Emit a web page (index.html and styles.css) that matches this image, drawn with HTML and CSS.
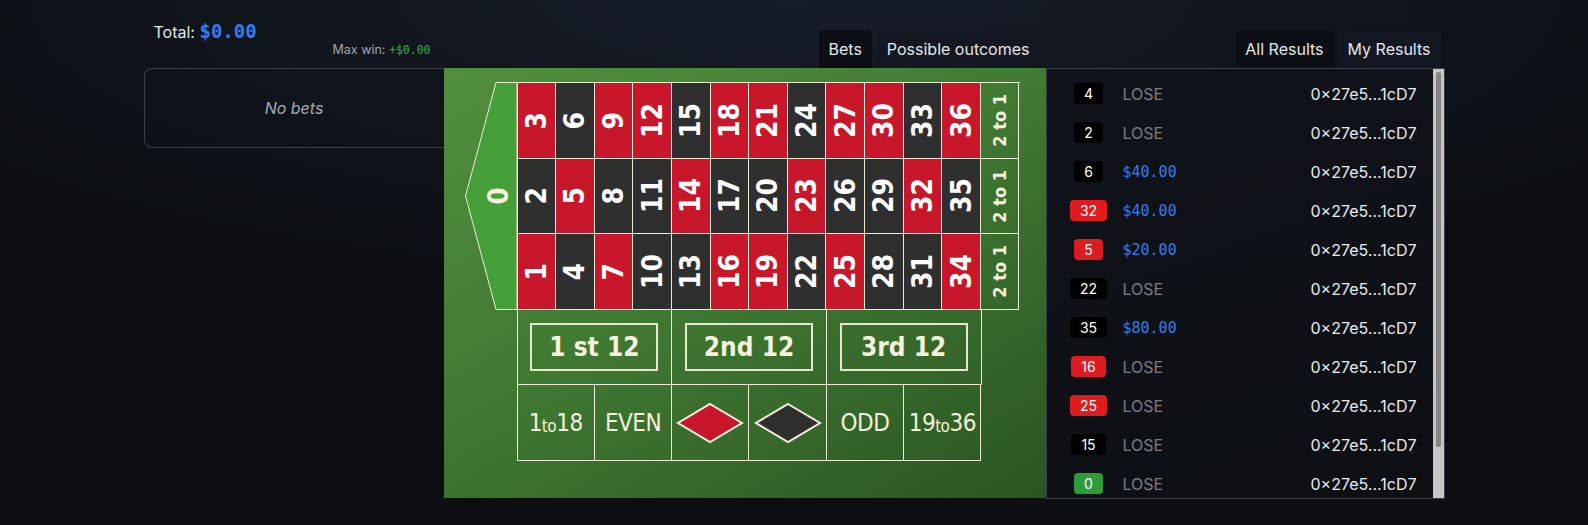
FILE: index.html
```html
<!DOCTYPE html>
<html>
	<head>
		<meta charset="UTF-8">
		<title>Roulette</title>
		<link rel="stylesheet" href="styles.css">
	</head>
	<body>
		<div class="page">
			<div class="head">
				<div class="totals">
					<div class="total">Total: <span class="total-amt">$0.00</span></div>
					<div class="maxwin">Max win: <span class="maxwin-amt">+$0.00</span></div>
				</div>
				<div class="tabs board-tabs">
					<div class="tab active">Bets</div>
					<div class="tab">Possible outcomes</div>
				</div>
				<div class="tabs result-tabs">
					<div class="tab active">All Results</div>
					<div class="tab">My Results</div>
				</div>
			</div>
			<div class="main">
				<div class="bets">No bets</div>
				<div class="board">
					<div class="board-top">
						<svg class="zero" width="52" height="228" viewBox="0 0 52 228">
							<polygon points="31,0.5 52,0.5 52,227.5 31,227.5 0.5,114"/>
							<text transform="translate(33 114) rotate(-90)">0</text>
						</svg>
						<div class="numbers">
							<div class="cell red"><span>3</span></div>
							<div class="cell black"><span>6</span></div>
							<div class="cell red"><span>9</span></div>
							<div class="cell red"><span>12</span></div>
							<div class="cell black"><span>15</span></div>
							<div class="cell red"><span>18</span></div>
							<div class="cell red"><span>21</span></div>
							<div class="cell black"><span>24</span></div>
							<div class="cell red"><span>27</span></div>
							<div class="cell red"><span>30</span></div>
							<div class="cell black"><span>33</span></div>
							<div class="cell red"><span>36</span></div>
							<div class="cell col"><span>2 to 1</span></div>

							<div class="cell black"><span>2</span></div>
							<div class="cell red"><span>5</span></div>
							<div class="cell black"><span>8</span></div>
							<div class="cell black"><span>11</span></div>
							<div class="cell red"><span>14</span></div>
							<div class="cell black"><span>17</span></div>
							<div class="cell black"><span>20</span></div>
							<div class="cell red"><span>23</span></div>
							<div class="cell black"><span>26</span></div>
							<div class="cell black"><span>29</span></div>
							<div class="cell red"><span>32</span></div>
							<div class="cell black"><span>35</span></div>
							<div class="cell col"><span>2 to 1</span></div>

							<div class="cell red"><span>1</span></div>
							<div class="cell black"><span>4</span></div>
							<div class="cell red"><span>7</span></div>
							<div class="cell black"><span>10</span></div>
							<div class="cell black"><span>13</span></div>
							<div class="cell red"><span>16</span></div>
							<div class="cell red"><span>19</span></div>
							<div class="cell black"><span>22</span></div>
							<div class="cell red"><span>25</span></div>
							<div class="cell black"><span>28</span></div>
							<div class="cell black"><span>31</span></div>
							<div class="cell red"><span>34</span></div>
							<div class="cell col"><span>2 to 1</span></div>
						</div>
					</div>
					<div class="dozens">
						<div class="dozen"><div class="dozen-box">1 st 12</div></div>
						<div class="dozen"><div class="dozen-box">2nd 12</div></div>
						<div class="dozen"><div class="dozen-box">3rd 12</div></div>
					</div>
					<div class="outside">
						<div class="out">1<small>to</small>18</div>
						<div class="out">EVEN</div>
						<div class="out">
							<svg class="diamond" width="70" height="42" viewBox="0 0 70 42"><polygon class="d-red" points="35,2 67,21 35,40 3,21"/></svg>
						</div>
						<div class="out">
							<svg class="diamond" width="70" height="42" viewBox="0 0 70 42"><polygon class="d-black" points="35,2 67,21 35,40 3,21"/></svg>
						</div>
						<div class="out">ODD</div>
						<div class="out">19<small>to</small>36</div>
					</div>
				</div>
				<div class="results">
					<div class="results-list">
						<div class="row"><div class="badge-cell"><span class="badge b-black">4</span></div><div class="outcome lose">LOSE</div><div class="addr">0×27e5...1cD7</div></div>
						<div class="row"><div class="badge-cell"><span class="badge b-black">2</span></div><div class="outcome lose">LOSE</div><div class="addr">0×27e5...1cD7</div></div>
						<div class="row"><div class="badge-cell"><span class="badge b-black">6</span></div><div class="outcome win">$40.00</div><div class="addr">0×27e5...1cD7</div></div>
						<div class="row"><div class="badge-cell"><span class="badge b-red">32</span></div><div class="outcome win">$40.00</div><div class="addr">0×27e5...1cD7</div></div>
						<div class="row"><div class="badge-cell"><span class="badge b-red">5</span></div><div class="outcome win">$20.00</div><div class="addr">0×27e5...1cD7</div></div>
						<div class="row"><div class="badge-cell"><span class="badge b-black">22</span></div><div class="outcome lose">LOSE</div><div class="addr">0×27e5...1cD7</div></div>
						<div class="row"><div class="badge-cell"><span class="badge b-black">35</span></div><div class="outcome win">$80.00</div><div class="addr">0×27e5...1cD7</div></div>
						<div class="row"><div class="badge-cell"><span class="badge b-red">16</span></div><div class="outcome lose">LOSE</div><div class="addr">0×27e5...1cD7</div></div>
						<div class="row"><div class="badge-cell"><span class="badge b-red">25</span></div><div class="outcome lose">LOSE</div><div class="addr">0×27e5...1cD7</div></div>
						<div class="row"><div class="badge-cell"><span class="badge b-black">15</span></div><div class="outcome lose">LOSE</div><div class="addr">0×27e5...1cD7</div></div>
						<div class="row"><div class="badge-cell"><span class="badge b-green">0</span></div><div class="outcome lose">LOSE</div><div class="addr">0×27e5...1cD7</div></div>
					</div>
					<div class="scrollbar"><div class="thumb"></div></div>
				</div>
			</div>
		</div>
	</body>
</html>
```
FILE: styles.css
```css
body{
	margin: 0;
	min-height: 525px;
	background: radial-gradient(ellipse 65% 55% at 50% 0%, #161d2a 0%, #10141b 55%, #0c0e12 100%);
	font-family: Inter, "Noto Sans", sans-serif;
	color: #e6e7ea;
}
.page{
	width: 1301px;
	margin: 0 auto;
}

/* top line */
.head{
	display: flex;
	height: 68px;
}
.totals{
	width: 300px;
	box-sizing: border-box;
	padding: 19px 13px 0 10px;
}
.total{
	font-size: 16px;
	line-height: 24px;
}
.total-amt{
	font-family: "DejaVu Sans Mono", monospace;
	color: #2b7ff0;
	font-size: 19px;
	font-weight: 700;
}
.maxwin{
	margin-top: -2px;
	text-align: right;
	font-size: 12.5px;
	line-height: 16px;
	color: #a3a6ad;
}
.maxwin-amt{
	font-family: "DejaVu Sans Mono", monospace;
	font-size: 11.5px;
	color: #27b04a;
}
.tabs{
	display: flex;
	justify-content: flex-end;
	align-items: flex-end;
	gap: 5px;
	box-sizing: border-box;
}
.board-tabs{
	width: 602px;
	padding-right: 6px;
}
.result-tabs{
	width: 399px;
	padding-right: 4px;
	gap: 4px;
}
.tab{
	height: 38px;
	padding: 0 10px;
	display: flex;
	align-items: center;
	font-size: 16px;
	border-radius: 5px 5px 0 0;
	background: #121722;
}
.tab.active{
	background: #0b0e14;
}

/* main line */
.main{
	display: flex;
	align-items: flex-start;
}
.bets{
	width: 300px;
	height: 80px;
	box-sizing: border-box;
	border: 1px solid #3a3e47;
	border-right: none;
	border-radius: 8px 0 0 8px;
	display: flex;
	align-items: center;
	justify-content: center;
	color: #a8abb1;
	font-size: 16px;
	font-style: italic;
}

/* roulette table */
.board{
	width: 602px;
	height: 430px;
	box-sizing: border-box;
	padding: 14px 0 0 21px;
	background: linear-gradient(150deg, #528f3d 0%, #417a33 45%, #2a5522 100%);
	font-family: "DejaVu Sans Condensed", "DejaVu Sans", sans-serif;
	font-stretch: semi-condensed;
	color: #f4f1dc;
}
.board-top{
	display: flex;
}
.zero polygon{
	fill: #45a03a;
	stroke: #efecd6;
	stroke-width: 1;
}
.zero text{
	fill: #f4f1dc;
	font-size: 28px;
	font-weight: 700;
	text-anchor: middle;
	dominant-baseline: central;
}
.numbers{
	width: 503px;
	height: 228px;
	box-sizing: border-box;
	display: grid;
	grid-template-columns: repeat(13, 1fr);
	grid-template-rows: repeat(3, 1fr);
	border-top: 1px solid #efecd6;
	border-left: 1px solid #efecd6;
}
.cell{
	border-right: 1px solid #efecd6;
	border-bottom: 1px solid #efecd6;
	display: flex;
	align-items: center;
	justify-content: center;
	color: #fff;
	font-size: 28px;
	font-weight: 700;
}
.cell span{
	writing-mode: vertical-rl;
	transform: rotate(180deg);
	white-space: nowrap;
}
.red{
	background: #c8162b;
}
.black{
	background: #2f2f2f;
}
.col{
	color: #f4f1dc;
	font-size: 18px;
}
.dozens,
.outside{
	display: flex;
	width: 465px;
	margin-left: 52px;
}
.dozens{
	height: 75px;
}
.outside{
	height: 76px;
}
.dozen,
.out{
	flex: 1;
	border-right: 1px solid #efecd6;
	border-bottom: 1px solid #efecd6;
	display: flex;
	align-items: center;
	justify-content: center;
}
.dozen:first-child,
.out:first-child{
	border-left: 1px solid #efecd6;
}
.dozen-box{
	width: 128px;
	height: 48px;
	box-sizing: border-box;
	border: 2px solid #e9e6cf;
	display: flex;
	align-items: center;
	justify-content: center;
	font-size: 26px;
	font-weight: 700;
}
.out{
	font-size: 24px;
	letter-spacing: -0.5px;
}
.out small{
	font-size: 17px;
	position: relative;
	top: 3px;
}
.d-red,
.d-black{
	stroke: #f4f1dc;
	stroke-width: 2;
}
.d-red{
	fill: #c8162b;
}
.d-black{
	fill: #2f2f2f;
}

/* results */
.results{
	width: 399px;
	height: 431px;
	box-sizing: border-box;
	border: 1px solid #3a3e47;
	background: linear-gradient(160deg, #10131a 0%, #0d0f13 100%);
	display: flex;
}
.results-list{
	flex: 1;
	overflow: hidden;
	padding-top: 5px;
}
.scrollbar{
	width: 11px;
	background: #c6c6c6;
	padding-top: 3px;
	box-sizing: border-box;
}
.thumb{
	width: 5px;
	height: 375px;
	margin-left: 3px;
	border-radius: 3px;
	background: #858585;
}
.row{
	display: flex;
	align-items: center;
	height: 39px;
	padding: 0 16px 0 22px;
}
.badge-cell{
	width: 40px;
	display: flex;
	justify-content: center;
}
.badge{
	height: 21px;
	line-height: 21px;
	padding: 0 10px;
	border-radius: 4px;
	font-size: 14px;
	color: #fff;
}
.b-black{
	background: #000;
}
.b-red{
	background: #dc1c1f;
}
.b-green{
	background: #2e9c38;
}
.outcome{
	flex: 1;
	margin-left: 14px;
	font-size: 16px;
}
.lose{
	color: #7b7d82;
}
.win{
	font-family: "DejaVu Sans Mono", monospace;
	font-size: 15px;
	color: #2b7ff0;
}
.addr{
	font-size: 16px;
	color: #ebebed;
}
```
